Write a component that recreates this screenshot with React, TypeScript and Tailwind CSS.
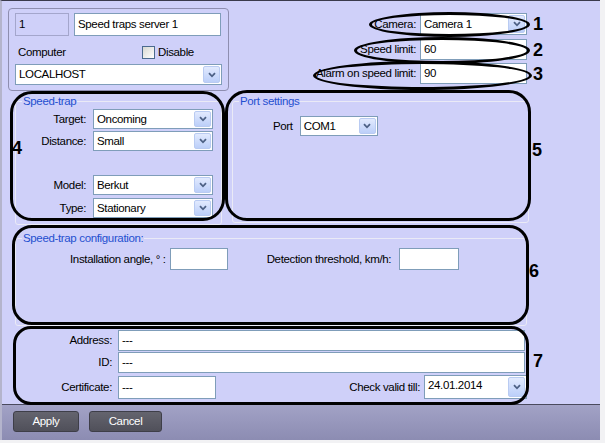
import React from 'react';

const Chevron = () => (
  <svg width="8" height="6" viewBox="0 0 8 6">
    <path d="M1 1.2 L4 4.3 L7 1.2" fill="none" stroke="#4d6185" strokeWidth="1.8" />
  </svg>
);

const Select: React.FC<{ value: string; className?: string; textClass?: string }> = ({ value, className = '', textClass = '' }) => (
  <div className={`flex items-stretch bg-white border border-[#7f9db9] ${className}`}>
    <span className={`flex-1 pl-[3px] flex items-center whitespace-nowrap overflow-hidden ${textClass}`}>{value}</span>
    <span className="my-[1px] mr-[1px] w-[17px] flex items-center justify-center rounded-[2px] border border-[#b9cbf2] bg-gradient-to-b from-[#e2eafe] to-[#bccff9]">
      <Chevron />
    </span>
  </div>
);

const Input: React.FC<{ value?: string; className?: string }> = ({ value = '', className = '' }) => (
  <div className={`flex items-center bg-white border border-[#7f9db9] pl-[3px] whitespace-nowrap ${className}`}>{value}</div>
);

const Legend: React.FC<{ children: React.ReactNode }> = ({ children }) => (
  <legend className="ml-[6px] px-[1px] leading-[14px] text-[#1f4fd0]">{children}</legend>
);

const SpeedTrapRow: React.FC<{ label: string; value: string; className?: string }> = ({ label, value, className = '' }) => (
  <div className={`flex items-center ${className}`}>
    <span className="w-[70px] text-right">{label}</span>
    <Select value={value} className="ml-[7px] w-[120px] h-[20px]" />
  </div>
);

const TopRow: React.FC<{ label: string; num: string; children: React.ReactNode; className?: string }> = ({ label, num, children, className = '' }) => (
  <div className={`flex items-center ${className}`}>
    <span className="mr-[4px]">{label}</span>
    {children}
    <span className="w-[20px] pl-[6px] text-[18px] font-bold leading-none tracking-normal">{num}</span>
  </div>
);

export default function App() {
  return (
    <div className="w-[605px] h-[443px] bg-[#f2f2f4] text-[11.5px] tracking-[-0.35px] leading-[15px] text-black font-['Liberation_Sans',Arial,sans-serif]">
      <div className="relative w-[600px] h-[440px] bg-[#cfd0f9] border-t border-t-[#3a3a4c] border-l-2 border-l-[#b4b4cc] flex flex-col">
        {/* main area */}
        <div className="h-[403px] flex flex-col">
          {/* top row */}
          <div className="flex h-[89px]">
            <div className="ml-[6px] mt-[7px] w-[221px] h-[83px] border border-[#8e8eb0] rounded-[4px] pl-[6px] pt-[4px] flex flex-col">
              <div className="flex">
                <div className="w-[54px] h-[23px] border border-[#a4a6cc] pl-[3px] flex items-center">1</div>
                <Input value="Speed traps server 1" className="ml-[5px] w-[147px] h-[23px]" />
              </div>
              <div className="flex items-center h-[27px] pt-[5px]">
                <span className="w-[127px] pl-[3px]">Computer</span>
                <span className="w-[13px] h-[13px] border border-[#4b6a8e] bg-gradient-to-br from-[#d8d8d2] to-white" />
                <span className="ml-[3px]">Disable</span>
              </div>
              <Select value="LOCALHOST" className="mt-[1px] w-[207px] h-[21px]" />
            </div>
            <div className="flex-1 flex flex-col items-end pr-[53px] pt-[12px]">
              <TopRow label="Camera:" num="1">
                <Select value="Camera 1" className="w-[107px] h-[22px]" />
              </TopRow>
              <TopRow label="Speed limit:" num="2" className="mt-[4px]">
                <Input value="60" className="w-[107px] h-[21px]" />
              </TopRow>
              <TopRow label="Alarm on speed limit:" num="3" className="mt-[3px]">
                <Input value="90" className="w-[107px] h-[21px]" />
              </TopRow>
            </div>
          </div>

          {/* groups row */}
          <div className="flex mt-[4px]">
            <fieldset className="ml-[13px] w-[207px] h-[131px] border border-[#eaeaf6] rounded-[3px]">
              <Legend>Speed-trap</Legend>
              <SpeedTrapRow label="Target:" value="Oncoming" className="mt-[1px]" />
              <SpeedTrapRow label="Distance:" value="Small" className="mt-[2px]" />
              <SpeedTrapRow label="Model:" value="Berkut" className="mt-[24px]" />
              <SpeedTrapRow label="Type:" value="Stationary" className="mt-[3px]" />
            </fieldset>
            <fieldset className="ml-[10px] w-[297px] h-[129px] border border-[#eaeaf6] rounded-[3px]">
              <Legend>Port settings</Legend>
              <div className="flex items-center mt-[8px] pl-[40px]">
                <span>Port</span>
                <Select value="COM1" className="ml-[7px] w-[78px] h-[20px]" />
              </div>
            </fieldset>
          </div>

          {/* configuration */}
          <fieldset className="ml-[13px] mt-[6px] w-[512px] h-[95px] border border-[#eaeaf6] rounded-[3px]">
            <Legend>Speed-trap configuration:</Legend>
            <div className="flex items-center mt-[3px]">
              <span className="ml-[54px]">Installation angle, ° :</span>
              <Input className="ml-[4px] w-[58px] h-[22px]" />
              <span className="ml-[39px]">Detection threshold, km/h:</span>
              <Input className="ml-[8px] w-[60px] h-[22px]" />
            </div>
          </fieldset>

          {/* address block */}
          <div className="mt-[4px] flex flex-col">
            <div className="flex items-center">
              <span className="w-[110px] text-right">Address:</span>
              <Input value="---" className="ml-[6px] w-[407px] h-[21px]" />
            </div>
            <div className="flex items-center mt-[1px]">
              <span className="w-[110px] text-right">ID:</span>
              <Input value="---" className="ml-[6px] w-[407px] h-[21px]" />
            </div>
            <div className="flex items-center mt-[2px]">
              <span className="w-[110px] text-right">Certificate:</span>
              <Input value="---" className="ml-[6px] w-[98px] h-[23px]" />
              <span className="ml-auto mr-[4px]">Check valid till:</span>
              <Select value="24.01.2014" textClass="!items-start pt-[2px]" className="mr-[73px] w-[103px] h-[24px]" />
            </div>
          </div>
        </div>

        {/* bottom bar */}
        <div className="h-[36px] border-t border-t-[#4a4a5e] bg-gradient-to-b from-[#a2a2c6] to-[#8c8cb2] flex items-start pt-[6px]">
          <button className="ml-[11px] w-[66px] h-[21px] rounded-[3px] border border-[#3e3e48] bg-gradient-to-b from-[#64646e] to-[#50505a] text-white">Apply</button>
          <button className="ml-[10px] w-[73px] h-[21px] rounded-[3px] border border-[#3e3e48] bg-gradient-to-b from-[#64646e] to-[#50505a] text-white">Cancel</button>
        </div>

        {/* annotations */}
        <div className="absolute left-[367px] top-[11px] w-[161px] h-[25px] border-[3px] border-black rounded-[50%]" />
        <div className="absolute left-[352px] top-[36px] w-[176px] h-[27px] border-[3px] border-black rounded-[50%]" />
        <div className="absolute left-[311px] top-[60px] w-[219px] h-[29px] border-[3px] border-black rounded-[50%]" />
        <div className="absolute left-[8px] top-[90px] w-[215px] h-[130px] border-[3px] border-black rounded-[22px]" />
        <div className="absolute left-[223px] top-[89px] w-[306px] h-[131px] border-[3px] border-black rounded-[22px]" />
        <div className="absolute left-[10px] top-[224px] w-[517px] h-[100px] border-[3px] border-black rounded-[20px]" />
        <div className="absolute left-[11px] top-[325px] w-[516px] h-[79px] border-[3px] border-black rounded-[18px]" />
        <span className="absolute left-[10px] top-[138px] text-[18px] font-bold leading-none tracking-normal">4</span>
        <span className="absolute left-[530px] top-[140px] text-[18px] font-bold leading-none tracking-normal">5</span>
        <span className="absolute left-[527px] top-[261px] text-[18px] font-bold leading-none tracking-normal">6</span>
        <span className="absolute left-[531px] top-[351px] text-[18px] font-bold leading-none tracking-normal">7</span>
      </div>
    </div>
  );
}
